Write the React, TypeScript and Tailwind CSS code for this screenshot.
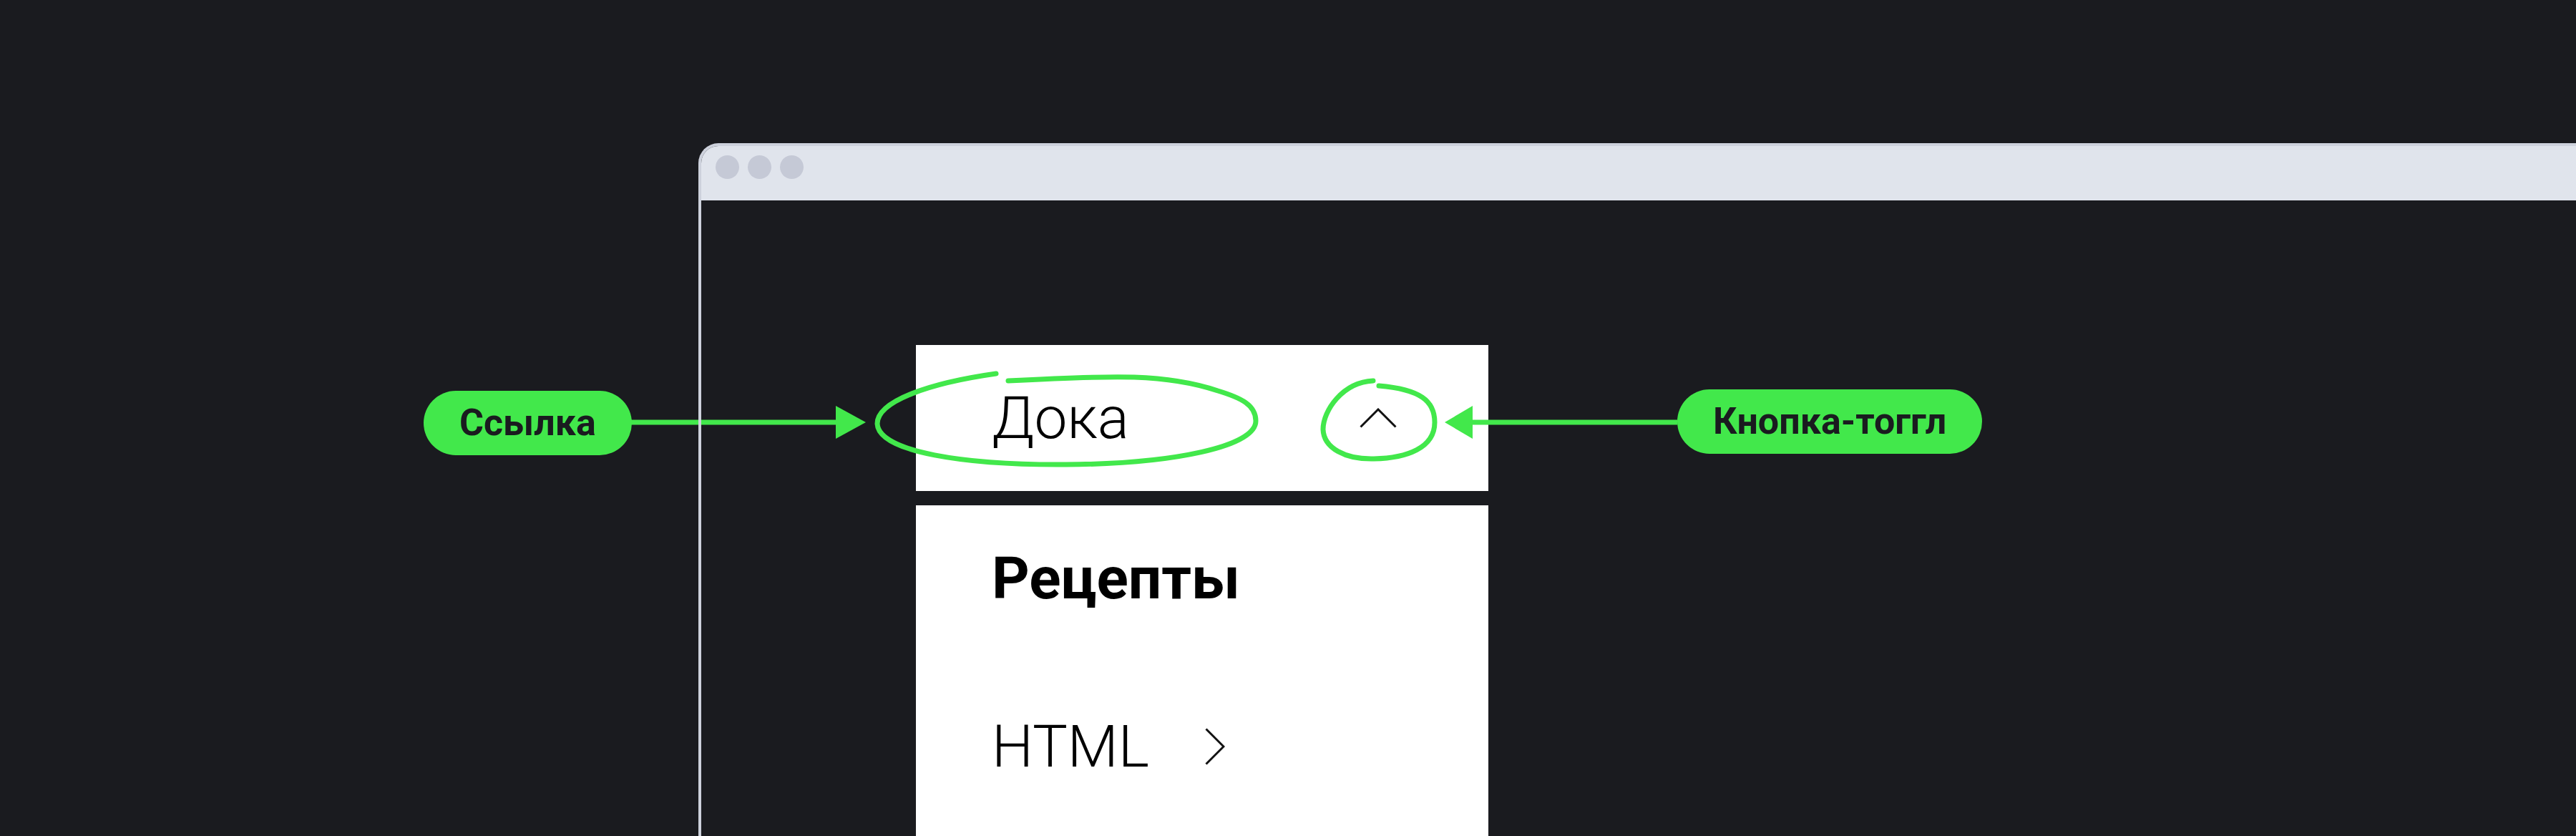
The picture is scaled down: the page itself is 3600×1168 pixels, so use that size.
export default function App() {
  return (
    <div className="relative w-[3600px] h-[1168px] overflow-hidden bg-[#1a1b1f] font-['Roboto','Noto_Sans',sans-serif]">
      {/* Browser frame */}
      <div className="flex h-full pl-[976px] pt-[200px]">
        <div className="flex flex-1 flex-col overflow-hidden rounded-tl-[28px] border-l-4 border-t-4 border-[#cdd1dc]">
          <div className="flex h-[76px] shrink-0 items-start gap-[12px] bg-[#e0e4ec] pl-[20px] pt-[13px]">
            <span className="h-[33px] w-[33px] rounded-full bg-[#c5c9d6]" />
            <span className="h-[33px] w-[33px] rounded-full bg-[#c5c9d6]" />
            <span className="h-[33px] w-[33px] rounded-full bg-[#c5c9d6]" />
          </div>

          {/* Page content */}
          <div className="flex flex-1 flex-col pl-[300px] pt-[202px]">
            <div className="flex w-[800px] flex-1 flex-col gap-[20px]">
              <div className="flex h-[204px] shrink-0 items-center justify-between bg-white pl-[106px] pr-[106px]">
                <a href="#" className="text-[82px] font-light leading-none text-black">
                  Дока
                </a>
                <button className="flex h-[96px] w-[96px] items-center justify-center">
                  <svg width="52" height="28" viewBox="0 0 52 28" fill="none">
                    <path d="M1.5 26.5 26 2 50.5 26.5" stroke="#111" strokeWidth="3" />
                  </svg>
                </button>
              </div>

              <div className="flex-1 bg-white pl-[106px] pt-[61px]">
                <div className="text-[82px] font-bold leading-none text-black">Рецепты</div>
                <div className="mt-[153px] flex items-center gap-[78px]">
                  <span className="text-[82px] font-light leading-none text-black">HTML</span>
                  <svg width="28" height="52" viewBox="0 0 28 52" fill="none">
                    <path d="M1.5 1.5 26 26 1.5 50.5" stroke="#111" strokeWidth="3" />
                  </svg>
                </div>
              </div>
            </div>
          </div>
        </div>
      </div>

      {/* Annotations */}
      <svg
        className="pointer-events-none absolute left-0 top-0"
        width="3600"
        height="1168"
        viewBox="0 0 3600 1168"
        fill="none"
      >
        <g stroke="#42e84b" strokeWidth="7" strokeLinecap="round">
          <path d="M1392 522 C1300 535 1226 560 1226 592 C1228 632 1350 650 1490 649 C1640 648 1755 624 1755 588 C1755 566 1735 556 1702 546 C1630 522 1560 524 1409 532" />
          <path d="M1919 532 C1876 534 1849 574 1849 600 C1850 626 1880 642 1920 641 C1966 640 2005 626 2005 590 C2005 560 1985 544 1927 539" />
        </g>
        <g stroke="#42e84b" strokeWidth="7">
          <path d="M881 590 H976" />
          <path d="M980 590 H1172" />
          <path d="M2056 590 H2344" />
        </g>
        <g fill="#42e84b">
          <path d="M1168 567 L1210 590 L1168 613 Z" />
          <path d="M2058 567 L2019 590 L2058 613 Z" />
        </g>
      </svg>

      <div className="absolute left-[592px] top-[546px] flex h-[90px] items-center rounded-full bg-[#42e84b] px-[50px] text-[52px] font-bold leading-none text-[#1a1b1f]">
        Ссылка
      </div>
      <div className="absolute left-[2344px] top-[544px] flex h-[90px] items-center rounded-full bg-[#42e84b] px-[50px] text-[52px] font-bold leading-none text-[#1a1b1f]">
        Кнопка-тоггл
      </div>
    </div>
  );
}
